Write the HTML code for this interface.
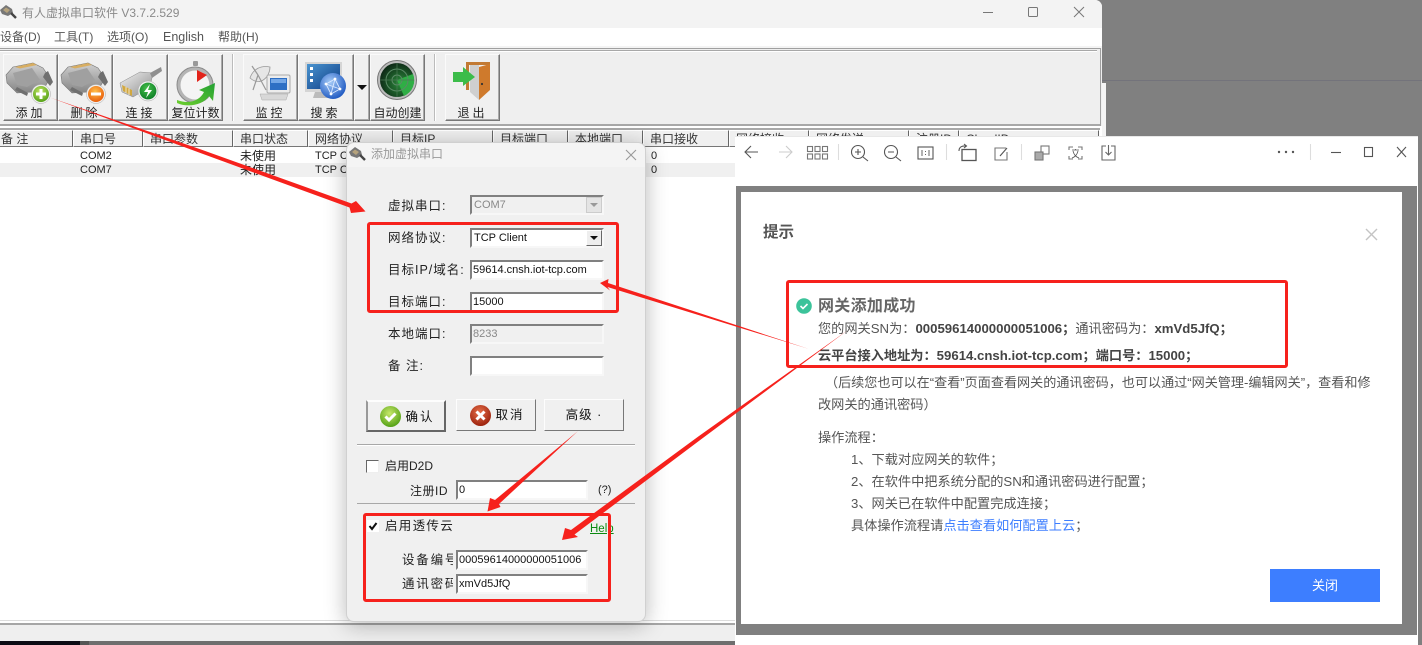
<!DOCTYPE html>
<html lang="zh"><head><meta charset="utf-8"><title>有人虚拟串口软件</title>
<style>
html,body{margin:0;padding:0;width:1422px;height:645px;overflow:hidden;background:#808080}
body{position:relative;font-family:"Liberation Sans","Noto Sans CJK SC",sans-serif;font-size:12px;color:#222}
.a{position:absolute;box-sizing:border-box}
.t{position:absolute;white-space:nowrap;line-height:16px;height:16px}
.bt{position:absolute;top:54px;height:67px;background:#f0f0f0;border:1px solid;border-color:#fafafa #777 #777 #fafafa;box-shadow:inset -1px -1px 0 #aaa;box-sizing:border-box}
.bl{position:absolute;top:105px;text-align:center;height:16px;line-height:16px;font-size:12px;color:#222;white-space:nowrap}
.th{position:absolute;top:130px;height:17px;background:#f0f0f0;border:1px solid;border-color:#fff #666 #777 #fff;box-sizing:border-box;line-height:16px;font-size:12px;color:#333;padding-left:6px;overflow:hidden;white-space:nowrap}
.f{position:absolute;background:#fff;border:2px solid;border-color:#808080 #f7f7f7 #f7f7f7 #808080;box-sizing:border-box;font-size:11px;line-height:16px;padding-left:1px;color:#111;white-space:nowrap;overflow:hidden}
.l{position:absolute;white-space:nowrap;font-size:12.5px;letter-spacing:1px;color:#222;line-height:16px;height:16px}
.b{position:absolute;box-sizing:border-box;background:#f0f0f0;border:1px solid;border-color:#fdfdfd #777 #777 #fdfdfd;text-align:center;font-size:12.5px;letter-spacing:2px;color:#111;line-height:30px}
.red{position:absolute;box-sizing:border-box;border:3px solid #f6211c;border-radius:3px}
.v{position:absolute;white-space:nowrap;font-size:13.2px;line-height:18px;height:18px;color:#555}
.v b{color:#444}
</style></head><body>

<!-- main window -->
<div class="a" style="left:0;top:0;width:1102px;height:641px;background:#fff;border-top-right-radius:7px"></div>
<div class="a" style="left:0;top:0;width:1102px;height:28px;background:#f3f3f3;border-top-right-radius:7px"></div>
<svg class="a" style="left:0;top:4px" width="18" height="16" viewBox="0 0 18 16"><path d="M0 6 L6 1 L12 5 L13 9 L8 12 L2 10Z" fill="#777"/><path d="M3 6 L6 3.5 L10 6 L7 9Z" fill="#b5a27c"/><path d="M11 9 L16 14" stroke="#444" stroke-width="2.4"/></svg>
<div class="t" style="left:22px;top:5px;font-size:12px;color:#8a8a8a">有人虚拟串口软件 V3.7.2.529</div>
<svg class="a" style="left:980px;top:4px" width="110" height="16" fill="none" stroke="#777" stroke-width="1"><path d="M3 8.5H13"/><rect x="48.5" y="3.5" width="9" height="9" rx="1"/><path d="M94 3L104 13M104 3L94 13"/></svg>
<div class="t" style="left:0;top:29px;font-size:12px;color:#555">设备(D)</div>
<div class="t" style="left:54px;top:29px;font-size:12px;color:#555">工具(T)</div>
<div class="t" style="left:107px;top:29px;font-size:12px;color:#555">选项(O)</div>
<div class="t" style="left:163px;top:29px;font-size:12.5px;color:#555">English</div>
<div class="t" style="left:218px;top:29px;font-size:12px;color:#555">帮助(H)</div>

<!-- toolbar -->
<div class="a" style="left:0;top:46px;width:1102px;height:80px;background:#efefef;border-top:2px solid #f4f4f4"></div>
<div class="a" style="left:0;top:48px;width:1101px;height:78px;border:1px solid #a0a0a0;border-left:0"></div>
<div class="a" style="left:0;top:50px;width:1097px;height:2px;background:#a8a8a8;border-bottom:1px solid #fff"></div>
<div class="a" style="left:0;top:124px;width:1100px;height:2px;background:#a8a8a8"></div>
<div class="a" style="left:0;top:128px;width:1100px;height:2px;background:#a8a8a8"></div>
<div class="bt" style="left:3px;width:55px"></div>
<div class="bt" style="left:58px;width:55px"></div>
<div class="bt" style="left:113px;width:55px"></div>
<div class="bt" style="left:168px;width:55px"></div>
<div class="a" style="left:232px;top:54px;width:2px;height:67px;background:#bbb;border-right:1px solid #fff"></div>
<div class="bt" style="left:243px;width:55px"></div>
<div class="bt" style="left:298px;width:56px"></div>
<div class="bt" style="left:354px;width:16px"></div>
<div class="bt" style="left:370px;width:55px"></div>
<div class="a" style="left:434px;top:54px;width:2px;height:67px;background:#bbb;border-right:1px solid #fff"></div>
<div class="bt" style="left:445px;width:55px"></div>
<div class="bl" style="left:3px;width:55px;letter-spacing:3px">添加</div>
<div class="bl" style="left:58px;width:55px;letter-spacing:3px">删除</div>
<div class="bl" style="left:113px;width:55px;letter-spacing:3px">连接</div>
<div class="bl" style="left:168px;width:55px">复位计数</div>
<div class="bl" style="left:243px;width:55px;letter-spacing:3px">监控</div>
<div class="bl" style="left:298px;width:55px;letter-spacing:3px">搜索</div>
<div class="bl" style="left:370px;width:55px">自动创建</div>
<div class="bl" style="left:445px;width:55px;letter-spacing:3px">退出</div>

<svg class="a" style="left:0;top:0" width="520" height="110" viewBox="0 0 520 110">
<defs>
<linearGradient id="g1" x1="0" y1="0" x2="0" y2="1"><stop offset="0" stop-color="#d0d0d0"/><stop offset="1" stop-color="#858585"/></linearGradient>
<linearGradient id="g2" x1="0" y1="0" x2="1" y2="1"><stop offset="0" stop-color="#f2f2f2"/><stop offset="1" stop-color="#8c8c8c"/></linearGradient>
<linearGradient id="ga" x1="0" y1="1" x2="1" y2="0"><stop offset="0" stop-color="#6fcf30"/><stop offset="1" stop-color="#22a032"/></linearGradient>
<radialGradient id="gg" cx=".45" cy=".35" r=".7"><stop offset="0" stop-color="#c8e86a"/><stop offset="1" stop-color="#4c9c10"/></radialGradient>
<radialGradient id="go" cx=".45" cy=".35" r=".7"><stop offset="0" stop-color="#ffc04a"/><stop offset="1" stop-color="#e85808"/></radialGradient>
<radialGradient id="gn" cx=".45" cy=".35" r=".7"><stop offset="0" stop-color="#45c04a"/><stop offset="1" stop-color="#0a7a25"/></radialGradient>
<radialGradient id="gb" cx=".4" cy=".35" r=".7"><stop offset="0" stop-color="#a5cbf7"/><stop offset="1" stop-color="#1a55c0"/></radialGradient>
<radialGradient id="gr" cx=".6" cy=".6" r=".6"><stop offset="0" stop-color="#2a8a3a"/><stop offset="1" stop-color="#0f2d18"/></radialGradient>
<linearGradient id="gs" x1="0" y1="0" x2="1" y2="1"><stop offset="0" stop-color="#4a94d0"/><stop offset="1" stop-color="#0d3c84"/></linearGradient>
<g id="ser">
<path d="M6 75 L13 67 L33 63 L43 68 L50 78 L45 87 L33 92 L17 93 L7 83Z" fill="url(#g1)" stroke="#777" stroke-width=".6"/>
<path d="M15 67 L33 63 L37 65 L20 68.5Z" fill="#d8ae62"/>
<path d="M13 73 L32 68 L40 80 L27 87 L17 85Z" fill="#a0a0a0"/>
<path d="M45 73 L48 71 L53 82 L50 86 L43 77Z" fill="#6f6f6f"/>
<path d="M17 87 L28 93 L27 96 L15 90Z" fill="#6f6f6f"/>
</g>
</defs>
<use href="#ser"/>
<circle cx="41" cy="94" r="9.5" fill="#eee" stroke="#aaa" stroke-width=".5"/><circle cx="41" cy="94" r="8" fill="url(#gg)"/>
<path d="M36 94H46M41 89V99" stroke="#fff" stroke-width="3"/>
<use href="#ser" x="55"/>
<circle cx="96" cy="94" r="9.5" fill="#eee" stroke="#aaa" stroke-width=".5"/><circle cx="96" cy="94" r="8" fill="url(#go)"/>
<path d="M91 94H101" stroke="#fff" stroke-width="3"/>
<!-- ethernet -->
<path d="M120 83 L140 72 L153 73 L150 87 L133 97 L122 92Z" fill="url(#g2)" stroke="#888" stroke-width=".5"/>
<path d="M122 85 L132 90 L132 96 L123 91Z" fill="#d2a83e"/>
<path d="M126 87V93M129 88.5V95" stroke="#fff" stroke-width=".7"/>
<path d="M150 73 L161 67 L162 71 L152 78Z" fill="#8f8f8f"/>
<circle cx="148" cy="91" r="10" fill="#eee" stroke="#aaa" stroke-width=".5"/><circle cx="148" cy="91" r="8.4" fill="url(#gn)"/>
<path d="M150 84 L144 92 L148 92 L146 98 L152 90 L148 90Z" fill="#fff"/>
<!-- timer -->
<rect x="193" y="61" width="5" height="5" rx="1" fill="#999"/>
<circle cx="195" cy="85" r="18" fill="#b4b4b4" stroke="#8a8a8a"/>
<circle cx="195" cy="85" r="14.5" fill="#f4f4f4"/>
<path d="M197 70L207 75L197 82Z" fill="#e2231a"/>
<path d="M177 100 C190 105 200 100 204 92 L199 90 L215 83 L213 101 L209 96 C203 105 188 108 177 103Z" fill="url(#ga)"/>
<!-- monitor dish -->
<path d="M250 78 C253 69 261 65 270 67 C270 77 260 87 250 78Z" fill="#e6e6e6" stroke="#999" stroke-width=".8"/>
<path d="M258 75 L252 66 M258 75 L253 90 M258 75 L266 90" stroke="#999" stroke-width="1.2"/>
<rect x="267" y="75" width="23" height="18" rx="1.5" fill="#ececec" stroke="#aaa"/>
<rect x="270" y="78" width="17" height="12" fill="#2e6fc4"/>
<rect x="271" y="79" width="15" height="4" fill="#73a6e6"/>
<path d="M260 94 H288 L286 100 H262Z" fill="#d8d8d8" stroke="#aaa" stroke-width=".5"/>
<!-- search -->
<rect x="305" y="62" width="37" height="30" fill="#d5d5d5"/>
<rect x="307" y="64" width="33" height="25" fill="url(#gs)"/>
<rect x="310" y="67" width="3" height="3" fill="#fff"/><rect x="310" y="73" width="3" height="3" fill="#fff"/><rect x="310" y="79" width="3" height="3" fill="#fff"/>
<path d="M315 92 H330 L333 98 H313Z" fill="#bbb"/>
<circle cx="333" cy="86" r="13" fill="url(#gb)"/>
<path d="M326 84 L335 79 L340 89 L331 94Z M326 84 L340 89 M335 79 L331 94" stroke="#dbe9ff" stroke-width=".9" fill="none"/>
<circle cx="326" cy="84" r="1.4" fill="#fff"/><circle cx="335" cy="79" r="1.4" fill="#fff"/><circle cx="340" cy="89" r="1.4" fill="#fff"/><circle cx="331" cy="94" r="1.4" fill="#fff"/>
<path d="M357 85 H367 L362 90Z" fill="#111"/>
<!-- radar -->
<circle cx="397" cy="80" r="19.5" fill="#bcbcbc" stroke="#777"/>
<circle cx="397" cy="80" r="17" fill="url(#gr)"/>
<path d="M397 80 L413 74 A17 17 0 0 1 404 96Z" fill="#2fae45"/>
<circle cx="397" cy="80" r="5" fill="none" stroke="#5b8a66"/><circle cx="397" cy="80" r="11" fill="none" stroke="#5b8a66"/>
<path d="M397 63V97M380 80H414" stroke="#4c7a56" stroke-width=".7"/>
<!-- exit -->
<path d="M466 62 H490 V90 H487 V65 H469 V90 H466Z" fill="#c27a34"/>
<path d="M470 65 H479 V100 L470 92Z" fill="#cfcfcf"/>
<path d="M479 67 L490 64 V90 L479 100Z" fill="#cf7a2c"/>
<circle cx="482" cy="84" r="1.1" fill="#333"/>
<path d="M453 72 H463 V67 L475 77 L463 86 V82 H453Z" fill="#3cbc4a"/>
</svg>

<!-- list -->
<div class="th" style="left:-6px;width:79px">备 注</div>
<div class="th" style="left:73px;width:70px">串口号</div>
<div class="th" style="left:143px;width:90px">串口参数</div>
<div class="th" style="left:233px;width:75px">串口状态</div>
<div class="th" style="left:308px;width:85px">网络协议</div>
<div class="th" style="left:393px;width:100px">目标IP</div>
<div class="th" style="left:493px;width:75px">目标端口</div>
<div class="th" style="left:568px;width:75px">本地端口</div>
<div class="th" style="left:643px;width:86px">串口接收</div>
<div class="th" style="left:729px;width:80px">网络接收</div>
<div class="th" style="left:809px;width:100px">网络发送</div>
<div class="th" style="left:909px;width:50px">注册ID</div>
<div class="th" style="left:959px;width:140px">CloudID</div>
<div class="a" style="left:0;top:163px;width:1100px;height:14px;background:#f0f0f0"></div>
<div class="t" style="left:80px;top:148px;font-size:11px">COM2</div>
<div class="t" style="left:240px;top:148px;font-size:12px">未使用</div>
<div class="t" style="left:315px;top:148px;font-size:11px">TCP Client</div>
<div class="t" style="left:651px;top:148px;font-size:11px">0</div>
<div class="t" style="left:80px;top:162px;font-size:11px">COM7</div>
<div class="t" style="left:240px;top:162px;font-size:12px">未使用</div>
<div class="t" style="left:315px;top:162px;font-size:11px">TCP Client</div>
<div class="t" style="left:651px;top:162px;font-size:11px">0</div>

<!-- bottom of main -->
<div class="a" style="left:0;top:620px;width:1102px;height:1px;background:#ddd"></div>
<div class="a" style="left:0;top:623px;width:1102px;height:18px;background:#efefef;border-top:2px solid #a6a6a6"></div>
<div class="a" style="left:0;top:641px;width:80px;height:4px;background:#0b0b14"></div>
<div class="a" style="left:80px;top:641px;width:9px;height:4px;background:#555"></div>
<div class="a" style="left:89px;top:641px;width:650px;height:4px;background:#6e6e6e"></div>
<div class="a" style="left:1102px;top:83px;width:4px;height:53px;background:#f4f4f4"></div>
<div class="a" style="left:1102px;top:80px;width:320px;height:1px;background:#73737b"></div>

<!-- dialog -->
<div class="a" style="left:346px;top:142px;width:300px;height:480px;background:#f0f0f0;border-radius:8px;box-shadow:0 3px 22px rgba(0,0,0,.28);border:1px solid #d0d0d0"></div>
<div class="a" style="left:347px;top:143px;width:298px;height:24px;background:#f4f4f4;border-radius:8px 8px 0 0"></div>
<svg class="a" style="left:349px;top:146px" width="18" height="16" viewBox="0 0 18 16"><path d="M0 6 L6 1 L12 5 L13 9 L8 12 L2 10Z" fill="#777"/><path d="M3 6 L6 3.5 L10 6 L7 9Z" fill="#b5a27c"/><path d="M11 9 L16 14" stroke="#444" stroke-width="2.4"/></svg>
<div class="t" style="left:371px;top:146px;font-size:12px;color:#9a9a9a">添加虚拟串口</div>
<svg class="a" style="left:625px;top:149px" width="12" height="12"><path d="M1 1L11 11M11 1L1 11" stroke="#999" stroke-width="1.1"/></svg>

<div class="l" style="left:388px;top:198px">虚拟串口:</div>
<div class="f" style="left:470px;top:195px;width:134px;height:20px;background:#f0f0f0;color:#888;padding-left:2px">COM7</div>
<div class="a" style="left:586px;top:197px;width:16px;height:16px;background:#e4e4e4;border:1px solid #ccc"></div>
<svg class="a" style="left:589px;top:202px" width="10" height="6"><path d="M1 1H9L5 5Z" fill="#999"/></svg>
<div class="l" style="left:388px;top:230px">网络协议:</div>
<div class="f" style="left:470px;top:228px;width:134px;height:20px;padding-left:2px">TCP Client</div>
<div class="a" style="left:586px;top:230px;width:16px;height:16px;background:#eee;border:1px solid;border-color:#fff #666 #666 #fff"></div>
<svg class="a" style="left:589px;top:235px" width="10" height="6"><path d="M1 1H9L5 5Z" fill="#111"/></svg>
<div class="l" style="left:388px;top:262px">目标IP/域名:</div>
<div class="f" style="left:470px;top:260px;width:134px;height:20px">59614.cnsh.iot-tcp.com</div>
<div class="l" style="left:388px;top:294px">目标端口:</div>
<div class="f" style="left:470px;top:292px;width:134px;height:20px">15000</div>
<div class="l" style="left:388px;top:326px">本地端口:</div>
<div class="f" style="left:470px;top:324px;width:134px;height:20px;background:#f0f0f0;color:#888">8233</div>
<div class="l" style="left:388px;top:358px">备 注:</div>
<div class="f" style="left:470px;top:356px;width:134px;height:20px"></div>

<div class="b" style="left:366px;top:400px;width:80px;height:32px;border:2px solid;border-color:#fdfdfd #666 #666 #999;text-indent:28px;line-height:31px">确认</div>
<svg class="a" style="left:379px;top:405px" width="23" height="23"><circle cx="11.5" cy="11.5" r="10.5" fill="url(#gg)"/><path d="M6.5 11.5L10 15L16.5 8.5" fill="none" stroke="#fff" stroke-width="3"/></svg>
<div class="b" style="left:456px;top:399px;width:80px;height:32px;text-indent:28px">取消</div>
<svg class="a" style="left:469px;top:404px" width="23" height="23"><defs><radialGradient id="gx" cx=".45" cy=".35" r=".7"><stop offset="0" stop-color="#e8704a"/><stop offset="1" stop-color="#951c08"/></radialGradient></defs><circle cx="11.5" cy="11.5" r="10.5" fill="url(#gx)"/><path d="M7.5 7.5L15.5 15.5M15.5 7.5L7.5 15.5" stroke="#fff" stroke-width="3"/></svg>
<div class="b" style="left:544px;top:399px;width:80px;height:32px;letter-spacing:1px">高级 ·</div>

<div class="a" style="left:357px;top:444px;width:278px;height:2px;background:#a8a8a8;border-bottom:1px solid #fff"></div>
<div class="a" style="left:366px;top:460px;width:13px;height:13px;background:#fff;border:1px solid;border-color:#666 #eee #eee #666"></div>
<div class="t" style="left:385px;top:458px;font-size:12px">启用D2D</div>
<div class="l" style="left:410px;top:483px;letter-spacing:.5px;font-size:12px">注册ID</div>
<div class="f" style="left:456px;top:480px;width:132px;height:20px">0</div>
<div class="t" style="left:598px;top:482px;font-size:11px">(?)</div>
<div class="a" style="left:357px;top:503px;width:278px;height:1px;background:#a8a8a8"></div>
<div class="a" style="left:367px;top:520px;width:12px;height:12px;background:#fff"></div>
<svg class="a" style="left:367px;top:520px" width="12" height="12"><path d="M2.5 6L5 9L9.5 3" fill="none" stroke="#111" stroke-width="2"/></svg>
<div class="t" style="left:385px;top:518px;font-size:12.5px;letter-spacing:1.3px">启用透传云</div>
<div class="t" style="left:590px;top:521px;font-size:11.5px;color:#0a8a10;text-decoration:underline">Help</div>
<div class="a" style="left:402px;top:552px;width:51px;height:16px;overflow:hidden"><div class="t" style="left:0;top:0;font-size:12.5px;letter-spacing:1.8px">设备编号</div></div>
<div class="f" style="left:456px;top:550px;width:132px;height:20px">00059614000000051006</div>
<div class="a" style="left:402px;top:576px;width:51px;height:16px;overflow:hidden"><div class="t" style="left:0;top:0;font-size:12.5px;letter-spacing:1.8px">通讯密码</div></div>
<div class="f" style="left:456px;top:574px;width:132px;height:20px">xmVd5JfQ</div>

<div class="red" style="left:367px;top:222px;width:252px;height:91px"></div>
<div class="red" style="left:363px;top:513px;width:248px;height:89px"></div>

<!-- viewer -->
<div class="a" style="left:735px;top:136px;width:683px;height:509px;background:#fff;border-top:1px solid #e8e8e8"></div>
<div class="a" style="left:736px;top:186px;width:681px;height:449px;background:#808080"></div>
<div class="a" style="left:741px;top:192px;width:661px;height:432px;background:#fff"></div>
<svg class="a" style="left:736px;top:136px" width="682" height="50" viewBox="736 136 682 50" fill="none" stroke="#555" stroke-width="1.1">
<path d="M758 152H745M751 146L745 152L751 158"/>
<path d="M792 152H779M786 146L792 152L786 158" stroke="#ccc"/>
<g stroke="#777"><rect x="807.5" y="146.5" width="5" height="5"/><rect x="815" y="146.5" width="5" height="5"/><rect x="822.5" y="146.5" width="5" height="5"/><rect x="807.5" y="154" width="5" height="5"/><rect x="815" y="154" width="5" height="5"/><rect x="822.5" y="154" width="5" height="5"/></g>
<path d="M838.5 144V160M946.5 144V160M1021.5 144V160M1310.5 144V160" stroke="#ddd"/>
<circle cx="858" cy="152" r="6.5"/><path d="M863 157L868 161M855 152H861M858 149V155"/>
<circle cx="891" cy="152" r="6.5"/><path d="M896 157L901 161M888 152H894"/>
<rect x="918" y="147" width="15" height="12"/><path d="M922 150V156M929 150V156M925.5 151V152M925.5 154V155" stroke-width=".9"/>
<rect x="962" y="149.5" width="14" height="11" stroke-width="1.3"/><path d="M959 151C959 147 962 145.5 966 146M964 144L966.5 146L964 148"/>
<path d="M1006 148H995V160H1007V152" stroke="#777"/><path d="M1007 148L1000 156" stroke="#555"/>
<rect x="1041" y="146" width="8" height="8" stroke="#777"/><rect x="1035" y="152" width="8" height="8" fill="#aaa" stroke="#777"/>
<path d="M1069 150V147H1073M1078 147H1082V150M1082 156V159H1078M1073 159H1069V156" stroke="#777"/><path d="M1072 150H1079M1075.5 149V150M1073 151C1074 155 1076 157 1079 158M1078 151C1077 155 1075 157 1072 158" stroke-width=".8"/>
<path d="M1106 146H1102V160H1115V146H1111M1108.5 145V155M1105.5 152L1108.5 155L1111.5 152" stroke="#666"/>
<path d="M1331 152.5H1341"/><rect x="1364.5" y="147.5" width="8" height="9"/><path d="M1397 147L1406 157M1406 147L1397 157"/>
<circle cx="1279" cy="152" r="1.2" fill="#555" stroke="none"/><circle cx="1286" cy="152" r="1.2" fill="#555" stroke="none"/><circle cx="1293" cy="152" r="1.2" fill="#555" stroke="none"/>
</svg>
<div class="t" style="left:763px;top:225px;font-size:15.5px;font-weight:bold;color:#555">提示</div>
<svg class="a" style="left:1365px;top:228px" width="13" height="13"><path d="M1 1L12 12M12 1L1 12" stroke="#c4c4c4" stroke-width="1.4"/></svg>
<svg class="a" style="left:796px;top:298px" width="16" height="16"><circle cx="8" cy="8" r="7.8" fill="#3cc39a"/><path d="M4.5 8L7 10.5L11.5 6" fill="none" stroke="#fff" stroke-width="1.6"/></svg>
<div class="v" style="left:818px;top:298px;font-size:16px;letter-spacing:.3px;font-weight:bold;color:#666">网关添加成功</div>
<div class="v" style="left:818px;top:320px">您的网关SN为：<b>00059614000000051006；</b>通讯密码为：<b>xmVd5JfQ；</b></div>
<div class="v" style="left:818px;top:347px;font-weight:bold;color:#444">云平台接入地址为：59614.cnsh.iot-tcp.com；端口号：15000；</div>
<div class="v" style="left:825px;top:374px;font-size:13.1px">（后续您也可以在“查看”页面查看网关的通讯密码，也可以通过“网关管理-编辑网关”，查看和修</div>
<div class="v" style="left:818px;top:396px">改网关的通讯密码）</div>
<div class="v" style="left:818px;top:429px">操作流程：</div>
<div class="v" style="left:851px;top:451px">1、下载对应网关的软件；</div>
<div class="v" style="left:851px;top:473px">2、在软件中把系统分配的SN和通讯密码进行配置；</div>
<div class="v" style="left:851px;top:495px">3、网关已在软件中配置完成连接；</div>
<div class="v" style="left:851px;top:517px">具体操作流程请<span style="color:#3d7eff">点击查看如何配置上云</span>；</div>
<div class="a" style="left:1270px;top:569px;width:110px;height:33px;background:#3d7eff;color:#fff;text-align:center;line-height:33px;font-size:13px">关闭</div>
<div class="red" style="left:786px;top:280px;width:502px;height:88px"></div>

<!-- arrows -->
<svg class="a" style="left:0;top:0" width="1422" height="645" viewBox="0 0 1422 645" fill="#f6211c">
<path d="M50 97.5 L201 149.5 L351.5 203.5 L356 201 L365.5 211.5 L351 213 L349.5 207.5 L199 152.5Z"/>
<path d="M809 349 L608 283 L608.5 279 L600 283 L610 290.5 L607.5 287Z"/>
<path d="M578 431 L495 500 L490 498 L487.5 511.5 L500.5 507 L499 504Z"/>
<path d="M848 330 L699 436 L571 530 L565 528 L562 540 L578 537 L574.5 534.5 L701.5 439Z"/>
</svg>
</body></html>
